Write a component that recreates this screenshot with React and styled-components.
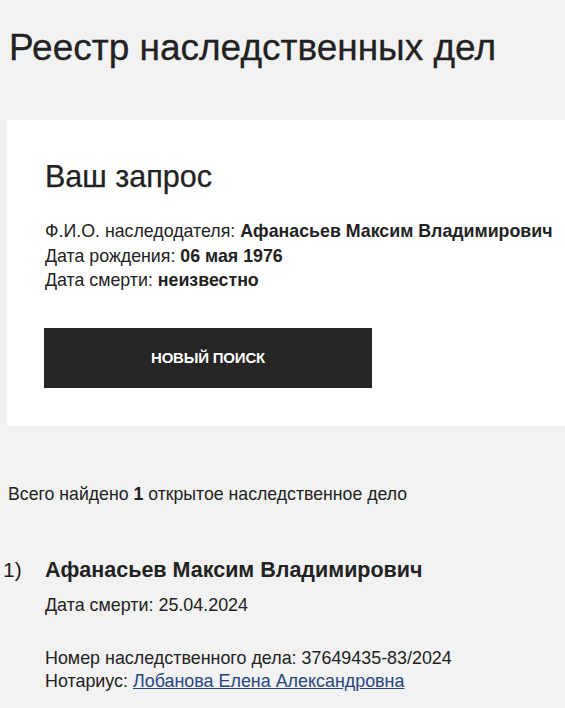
import styled, { createGlobalStyle } from "styled-components";

const GlobalStyle = createGlobalStyle`
  body {
    margin: 0;
    background: #f2f2f2;
    font-family: "Liberation Sans", Arial, sans-serif;
    color: #222;
  }
`;

const Page = styled.div`
  padding: 27px 0 20px 7px;
  overflow: hidden;
`;

const Title = styled.h1`
  margin: 0 0 51px 2px;
  font-size: 37px;
  line-height: 42px;
  font-weight: 400;
  -webkit-text-stroke: 0.3px #222;
`;

const Card = styled.section`
  background: #fff;
  padding: 39px 0 38px 38px;
`;

const CardTitle = styled.h2`
  margin: 0 0 26px;
  font-size: 30.5px;
  line-height: 34px;
  font-weight: 400;
  -webkit-text-stroke: 0.25px #222;
`;

const Info = styled.div`
  font-size: 17.8px;
  line-height: 24.5px;
  margin-bottom: 35px;
  white-space: nowrap;

  b {
    font-weight: 700;
  }
`;

const Button = styled.button`
  display: block;
  width: 328px;
  height: 60px;
  margin-left: -1px;
  border: none;
  background: #262626;
  color: #fff;
  font-family: inherit;
  font-size: 15px;
  font-weight: 700;
  letter-spacing: -0.2px;
  text-transform: uppercase;
  cursor: pointer;
`;

const Summary = styled.p`
  margin: 56px 0 0 1px;
  font-size: 17.7px;
  line-height: 24px;

  b {
    font-weight: 700;
  }
`;

const Case = styled.div`
  display: grid;
  grid-template-columns: 42px 1fr;
  margin: 51px 0 0 -4px;
`;

const Num = styled.span`
  font-size: 21px;
  line-height: 26px;
`;

const Name = styled.h3`
  margin: 0;
  font-size: 21.5px;
  line-height: 26px;
  font-weight: 700;
`;

const Line = styled.div`
  font-size: 17.9px;
  line-height: ${(p) => p.$lh || 24}px;
  margin-top: ${(p) => p.$mt || 0}px;
`;

const Link = styled.a`
  color: #27457f;
  text-decoration: underline;
`;

export default function App() {
  return (
    <>
      <GlobalStyle />
      <Page>
        <Title>Реестр наследственных дел</Title>
        <Card>
          <CardTitle>Ваш запрос</CardTitle>
          <Info>
            <div>
              Ф.И.О. наследодателя: <b>Афанасьев Максим Владимирович</b>
            </div>
            <div>
              Дата рождения: <b>06 мая 1976</b>
            </div>
            <div>
              Дата смерти: <b>неизвестно</b>
            </div>
          </Info>
          <Button>Новый поиск</Button>
        </Card>
        <Summary>
          Всего найдено <b>1</b> открытое наследственное дело
        </Summary>
        <Case>
          <Num>1)</Num>
          <div>
            <Name>Афанасьев Максим Владимирович</Name>
            <Line $mt={10}>Дата смерти: 25.04.2024</Line>
            <Line $mt={30} $lh={23}>
              Номер наследственного дела: 37649435-83/2024
            </Line>
            <Line $lh={23}>
              Нотариус: <Link href="#">Лобанова Елена Александровна</Link>
            </Line>
          </div>
        </Case>
      </Page>
    </>
  );
}
